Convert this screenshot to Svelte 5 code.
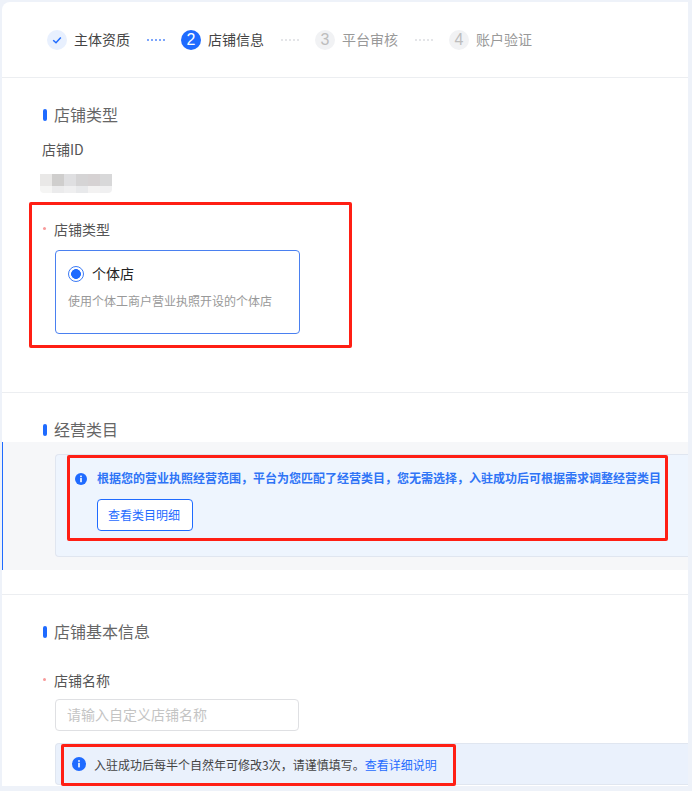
<script>
  const steps = [
    { label: "主体资质", state: "done" },
    { label: "店铺信息", state: "current" },
    { label: "平台审核", state: "todo" },
    { label: "账户验证", state: "todo" }
  ];

  // mosaic over the masked shop id
  const mosaic = [
    "#e9e8e7", "#cfcecd", "#dfdfe1", "#d5d4d5", "#d6d2d3", "#d8d8d9",
    "#f5f5f4", "#ebebec", "#efeff0", "#e8e9eb", "#f3f2f2", "#f0f0f1"
  ];
</script>

<div class="page">
  <main class="card">
    <nav class="steps">
      {#each steps as step, i}
        {#if i > 0}
          <span class="dots" class:active={step.state === "current"}></span>
        {/if}
        <div class="step {step.state}">
          <span class="circle">
            {#if step.state === "done"}
              <svg width="12" height="12" viewBox="0 0 12 12" fill="none">
                <path d="M2.2 6.2 L5 8.8 L9.8 3.4" stroke="#1f6bff" stroke-width="1.5" />
              </svg>
            {:else}
              {i + 1}
            {/if}
          </span>
          <span class="stepLabel">{step.label}</span>
        </div>
      {/each}
    </nav>

    <section class="typeSection">
      <h2 class="title">店铺类型</h2>
      <div class="idLabel">店铺ID</div>
      <div class="mosaic">
        {#each mosaic as color}
          <span style="background: {color}"></span>
        {/each}
      </div>
      <div class="formLabel first"><i class="req"></i>店铺类型</div>
      <div class="optionCard">
        <div class="optionHead">
          <span class="radio"></span>
          <span class="optionName">个体店</span>
        </div>
        <p class="optionDesc">使用个体工商户营业执照开设的个体店</p>
      </div>
    </section>

    <section class="categorySection">
      <h2 class="title">经营类目</h2>
      <div class="categoryPanel">
        <div class="categoryBox">
          <div class="tipLine">
            <svg class="info" width="12" height="12" viewBox="0 0 12 12">
              <circle cx="6" cy="6" r="6" fill="#1f6bff" />
              <rect x="5.2" y="2.6" width="1.6" height="1.6" fill="#fff" />
              <rect x="5.2" y="5" width="1.6" height="4.2" fill="#fff" />
            </svg>
            <span class="tipText">根据您的营业执照经营范围，平台为您匹配了经营类目，您无需选择，入驻成功后可根据需求调整经营类目</span>
          </div>
          <button class="detailBtn">查看类目明细</button>
        </div>
      </div>
    </section>

    <section class="basicSection">
      <h2 class="title">店铺基本信息</h2>
      <div class="formLabel name"><i class="req"></i>店铺名称</div>
      <input class="nameInput" type="text" placeholder="请输入自定义店铺名称" />
      <div class="notice">
        <svg class="info" width="14" height="14" viewBox="0 0 14 14">
          <circle cx="7" cy="7" r="7" fill="#1f6bff" />
          <rect x="6.2" y="3.2" width="1.6" height="1.6" fill="#fff" />
          <rect x="6.2" y="5.8" width="1.6" height="4.6" fill="#fff" />
        </svg>
        <span>入驻成功后每半个自然年可修改3次，请谨慎填写。<a href="#detail">查看详细说明</a></span>
      </div>
    </section>
  </main>

  <div class="mark markType"></div>
  <div class="mark markCategory"></div>
  <div class="mark markNotice"></div>
</div>

<style>
  :global(body) {
    margin: 0;
    background: #eef2f9;
  }
  .page {
    position: relative;
    height: 791px;
    overflow: hidden;
    padding: 2px 4px 5px 2px;
    box-sizing: border-box;
    font-family: "Noto Sans CJK SC", "Liberation Sans", sans-serif;
    font-size: 14px;
    color: #555;
  }
  .card {
    height: 100%;
    background: #fff;
    border-top-left-radius: 8px;
    overflow: hidden;
  }

  .steps {
    display: flex;
    align-items: center;
    height: 75px;
    padding-left: 45px;
    border-bottom: 1px solid #eceef1;
  }
  .step {
    display: flex;
    align-items: center;
    gap: 7px;
  }
  .circle {
    display: flex;
    align-items: center;
    justify-content: center;
    width: 20px;
    height: 20px;
    border-radius: 50%;
    background: #f1f2f4;
    color: #bdbdbd;
    font-family: "Liberation Sans", sans-serif;
    font-size: 16px;
  }
  .done .circle {
    background: #e8f0fe;
  }
  .current .circle {
    background: #1f6bff;
    color: #fff;
  }
  .stepLabel {
    line-height: 18px;
    padding-bottom: 2px;
    color: #999;
  }
  .done .stepLabel,
  .current .stepLabel {
    color: #444;
  }
  .dots {
    width: 18px;
    height: 2px;
    margin: 0 16px 0 17px;
    background: repeating-linear-gradient(to right, #e4e5e8 0 2px, transparent 2px 4px);
  }
  .dots.active {
    background: repeating-linear-gradient(to right, #7ea6fb 0 2px, transparent 2px 4px);
  }

  .title {
    position: relative;
    margin: 0 0 2px;
    padding-left: 52px;
    font-size: 16px;
    font-weight: 400;
    line-height: 22px;
    color: #666;
  }
  .title::before {
    content: "";
    position: absolute;
    left: 41px;
    top: 6px;
    width: 4px;
    height: 12px;
    border-radius: 2px;
    background: #1f6bff;
  }

  .typeSection {
    height: 315px;
    padding-top: 25px;
    box-sizing: border-box;
    border-bottom: 1px solid #eceef1;
  }
  .idLabel {
    margin: 13px 0 0 40px;
    line-height: 22px;
    color: #555;
  }
  .mosaic {
    display: grid;
    grid-template-columns: repeat(6, 12px);
    grid-template-rows: 12px 7px;
    margin: 14px 0 0 38px;
    width: 72px;
    border-radius: 0 0 4px 4px;
    overflow: hidden;
  }
  .formLabel {
    position: relative;
    padding-left: 52px;
    line-height: 18px;
    color: #555;
  }
  .formLabel.first {
    margin-top: 27px;
  }
  .req {
    position: absolute;
    left: 41px;
    top: 7px;
    width: 3px;
    height: 3px;
    border-radius: 50%;
    background: #f89a9a;
  }
  .optionCard {
    width: 245px;
    height: 84px;
    margin: 12px 0 0 53px;
    padding: 13px 12px 0;
    box-sizing: border-box;
    border: 1px solid #4a80f0;
    border-radius: 4px;
  }
  .optionHead {
    display: flex;
    align-items: center;
    gap: 8px;
    height: 20px;
  }
  .radio {
    width: 16px;
    height: 16px;
    box-sizing: border-box;
    border: 1px solid #3d7bf5;
    border-radius: 50%;
    background: radial-gradient(circle, #1f6bff 0 4.6px, #fff 5.2px);
  }
  .optionName {
    padding-bottom: 2px;
    line-height: 18px;
    color: #222;
  }
  .optionDesc {
    margin: 7px 0 0;
    font-size: 12px;
    line-height: 20px;
    color: #999;
  }

  .categorySection {
    height: 202px;
    padding-top: 25px;
    box-sizing: border-box;
    border-bottom: 1px solid #eceef1;
  }
  .categoryPanel {
    height: 128px;
    padding: 12px 0 0 52px;
    box-sizing: border-box;
    background: #f6f7f9;
    border-left: 1px solid #1f6bff;
  }
  .categoryBox {
    height: 103px;
    margin-right: -2px;
    padding: 14px 0 0 19px;
    box-sizing: border-box;
    background: #eef5fe;
    border: 1px solid #e0e6f0;
    border-right: 0;
    border-radius: 4px 0 0 4px;
  }
  .tipLine {
    display: flex;
    align-items: center;
    gap: 10px;
    height: 20px;
    font-size: 12px;
    font-weight: 700;
    color: #2f74f6;
    white-space: nowrap;
  }
  .tipText {
    padding-bottom: 2px;
    line-height: 18px;
  }
  .info {
    flex: none;
  }
  .detailBtn {
    display: block;
    width: 96px;
    height: 32px;
    margin: 10px 0 0 22px;
    padding: 0 2px 2px 0;
    border: 1px solid #1f6bff;
    border-radius: 4px;
    background: #fff;
    color: #1f6bff;
    font: inherit;
    font-size: 12px;
  }

  .basicSection {
    padding-top: 25px;
  }
  .formLabel.name {
    margin-top: 29px;
  }
  .nameInput {
    display: block;
    width: 244px;
    height: 32px;
    margin: 10px 0 0 53px;
    padding: 0 11px 2px;
    box-sizing: border-box;
    border: 1px solid #dfe0e3;
    border-radius: 4px;
    outline: none;
    font: inherit;
    background: #fff;
  }
  .nameInput::placeholder {
    color: #c4c4c4;
  }
  .notice {
    display: flex;
    align-items: center;
    gap: 8px;
    height: 42px;
    margin: 12px -2px 0 53px;
    padding-left: 16px;
    box-sizing: border-box;
    background: #eaf1fc;
    border: 1px solid #e0e6f0;
    border-right: 0;
    border-radius: 4px 0 0 4px;
    font-size: 12px;
    color: #444;
    white-space: nowrap;
  }
  .notice a {
    color: #1f6bff;
    text-decoration: none;
  }

  /* red review marks drawn on top of the screenshot */
  .mark {
    position: absolute;
    box-sizing: border-box;
    border: 3px solid #ff1f14;
    border-radius: 2px;
    pointer-events: none;
  }
  .markType {
    left: 29px;
    top: 202px;
    width: 323px;
    height: 146px;
  }
  .markCategory {
    left: 67px;
    top: 455px;
    width: 601px;
    height: 86px;
  }
  .markNotice {
    left: 61px;
    top: 744px;
    width: 395px;
    height: 42px;
  }
</style>
